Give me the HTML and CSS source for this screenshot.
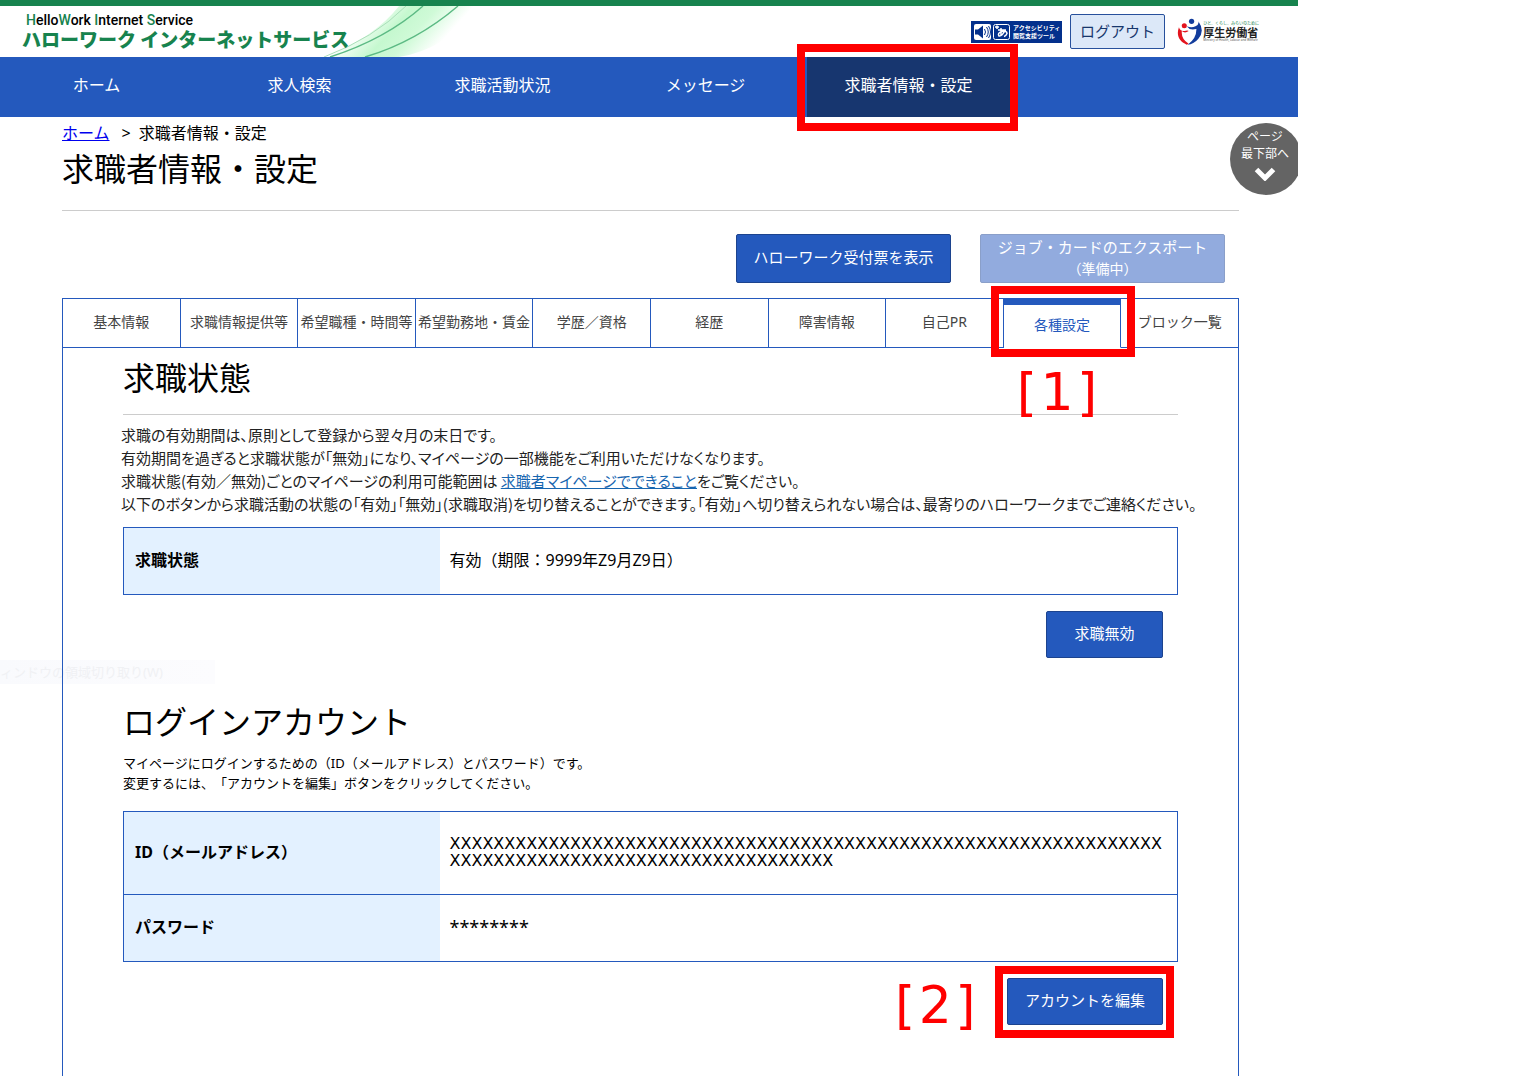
FILE: index.html
```html
<!DOCTYPE html>
<html lang="ja">
<head>
<meta charset="utf-8">
<title>求職者情報・設定</title>
<link rel="stylesheet" href="styles.css">
</head>
<body>
<div class="page">
  <header class="site-header">
    <div class="brand">
      <p class="brand-en"><b>H</b>ello<b>W</b>ork <b>I</b>nternet <b>S</b>ervice</p>
      <p class="brand-ja">ハローワーク インターネットサービス</p>
    </div>
    <svg class="swoosh" viewBox="0 0 160 51" aria-hidden="true">
      <defs>
        <linearGradient id="glow" gradientUnits="userSpaceOnUse" x1="45" y1="5" x2="100" y2="55">
          <stop offset="0" stop-color="#c5f8cf" stop-opacity="0"/>
          <stop offset=".4" stop-color="#c5f8cf"/>
          <stop offset=".65" stop-color="#cffad7"/>
          <stop offset="1" stop-color="#cffad7" stop-opacity="0"/>
        </linearGradient>
      </defs>
      <path d="M0 51 Q50 32 75 0 H160 Q120 44 75 51Z" fill="url(#glow)"/>
      <path d="M0 51 Q50 32 82 0" fill="none" stroke="#a9dfb9"/>
      <path d="M6 51 Q62 33 99 0 M41 51 Q92 36 134 0" fill="none" stroke="#5cba84" stroke-width="1.4"/>
    </svg>
    <div class="header-tools">
      <a class="access" href="#">
        <svg viewBox="0 0 42 22" width="42" height="22" aria-hidden="true">
          <rect x="3" y="3" width="17" height="16" rx="2" fill="#fff"/>
          <path d="M4 8.500h3l5-4v13l-5-4H4z" fill="#03308c"/>
          <path d="M13.500 8q2 3 0 6M15.500 6q3.500 5 0 10M17.500 5q4 6 0 12" fill="none" stroke="#03308c"/>
          <rect x="22.500" y="3.500" width="16" height="15" rx="2" fill="none" stroke="#fff"/>
          <path d="M24 6h4M26 4.500V8M27 9h8M30 7v8M34 9.500q-3 6-6 5.500q-2-3 3-4.500q5-1 5 2q-1 2.500-3 3" fill="none" stroke="#fff" stroke-width="1.500"/>
        </svg>
        <span>アクセシビリティ<br>閲覧支援ツール</span>
      </a>
      <button class="logout" type="button">ログアウト</button>
      <a class="ministry" href="#">
        <svg viewBox="0 0 26 28" width="26" height="28" aria-hidden="true">
          <circle cx="7.500" cy="7.500" r="2.600" fill="#e3141e"/>
          <circle cx="15" cy="3" r="2.700" fill="#123c9c"/>
          <path d="M2 9C-1 17 2 24 10 27L12 26Q4 21 5 13q3 3 7 0q-1-1-4 0Q3 13 2 9Z" fill="#e3141e"/>
          <path d="M22 3Q29 13 22 21Q17 27 11 27Q20 21 20 11q-4 1-7 0l-3-3q5 2 9 0Q23 6 22 3Z" fill="#123c9c"/>
        </svg>
        <span class="ministry-text"><small class="motto">ひと、くらし、みらいのために</small><strong>厚生労働省</strong><small>Ministry of Health, Labour and Welfare</small></span>
      </a>
    </div>
  </header>
  <nav class="main-nav">
    <a href="#">ホーム</a><a href="#">求人検索</a><a href="#">求職活動状況</a><a href="#">メッセージ</a><a class="current marked" href="#">求職者情報・設定</a>
  </nav>
  <a class="to-bottom" href="#bottom">ページ<br>最下部へ
    <svg viewBox="0 0 22 14" width="22" height="14" aria-hidden="true"><path d="M2.500 2.500 11 11l8.500-8.500" fill="none" stroke="#fff" stroke-width="5"/></svg>
  </a>
  <main>
    <p class="crumbs"><a href="#">ホーム</a><span>&gt;</span>求職者情報・設定</p>
    <h1>求職者情報・設定</h1>
    <div class="actions">
      <button class="btn" type="button">ハローワーク受付票を表示</button>
      <button class="btn export" type="button" disabled>ジョブ・カードのエクスポート<br><small>（準備中）</small></button>
    </div>
    <nav class="tabs">
      <a href="#">基本情報</a><a href="#">求職情報提供等</a><a href="#">希望職種・時間等</a><a href="#">希望勤務地・賃金</a><a href="#">学歴／資格</a><a href="#">経歴</a><a href="#">障害情報</a><a href="#">自己PR</a><a class="selected marked" href="#">各種設定<span class="callout">[<i>1</i>]</span></a><a href="#">ブロック一覧</a>
    </nav>
    <div class="panel">
      <section>
        <h2 class="ruled">求職状態</h2>
        <p class="notice">求職の有効期間は、原則として登録から翌々月の末日です。<br>有効期間を過ぎると求職状態が「無効」になり、マイページの一部機能をご利用いただけなくなります。<br>求職状態(有効／無効)ごとのマイページの利用可能範囲は <a href="#">求職者マイページでできること</a>をご覧ください。<br>以下のボタンから求職活動の状態の「有効」「無効」(求職取消)を切り替えることができます。「有効」へ切り替えられない場合は、最寄りのハローワークまでご連絡ください。</p>
        <table>
          <tr><th scope="row">求職状態</th><td>有効（期限：9999年Z9月Z9日）</td></tr>
        </table>
        <div class="row-end"><button class="btn" type="button">求職無効</button></div>
      </section>
      <p class="ghost" aria-hidden="true">ィンドウの領域切り取り(W)</p>
      <section class="account">
        <h2>ログインアカウント</h2>
        <p class="lead">マイページにログインするための（ID（メールアドレス）とパスワード）です。<br>変更するには、「アカウントを編集」ボタンをクリックしてください。</p>
        <table>
          <tr class="tall"><th scope="row">ID（メールアドレス）</th><td class="value-id">XXXXXXXXXXXXXXXXXXXXXXXXXXXXXXXXXXXXXXXXXXXXXXXXXXXXXXXXXXXXXXXXXXXXXXXXXXXXXXXXXXXXXXXXXXXXXXXXXXXX</td></tr>
          <tr><th scope="row">パスワード</th><td class="value-pw">********</td></tr>
        </table>
        <div class="row-end" id="bottom"><span class="marked"><span class="callout">[<i>2</i>]</span><button class="btn" type="button">アカウントを編集</button></span></div>
      </section>
    </div>
  </main>
</div>
</body>
</html>
```
FILE: styles.css
```css
* { box-sizing: border-box; }
body {
  margin: 0;
  padding-right: 228px;
  background: #fff;
  color: #000;
  font: 16px/24px "Noto Sans", "Noto Sans CJK JP", sans-serif;
}
p, h1, h2 { margin: 0; font-weight: 400; }
a { color: inherit; text-decoration: none; }
button { font: inherit; }
.page { position: relative; z-index: 0; min-height: 1076px; display: flex; flex-direction: column; }

.site-header {
  display: flex;
  height: 57px;
  border-top: 6px solid #17834e;
  padding-right: 39px;
}
.brand { width: 324px; padding: 6px 0 0 22px; white-space: nowrap; }
.brand-en { padding-left: 4px; font: 500 14px/16px Roboto, sans-serif; }
.brand-en b { color: #17834e; font-weight: 500; }
.brand-ja { position: relative; z-index: 1; color: #17834e; font: 900 19px/22px "Noto Sans CJK JP", sans-serif; }
.swoosh { width: 160px; height: 51px; }
.header-tools { display: flex; align-items: center; gap: 8px; margin-left: auto; }
.access { display: flex; align-items: center; width: 91px; height: 22px; background: #03308c; color: #fff; font: 700 6px/8px "Noto Sans CJK JP", sans-serif; white-space: nowrap; }
.logout { width: 95px; height: 35px; padding: 0 0 2px; border: 1px solid #27509c; border-radius: 2px; background: #dce8f8; color: #17366c; font-size: 15px; }
.ministry { display: flex; align-items: center; gap: 1px; width: 82px; margin-left: 4px; }
.ministry-text { display: flex; flex-direction: column; white-space: nowrap; }
.ministry-text strong { font: 700 11px/12px "Noto Sans CJK JP", sans-serif; color: #222; }
.ministry-text small { font: 3px/4px "Noto Sans", sans-serif; color: #555; }
.ministry-text .motto { font: 4px/5px "Noto Sans CJK JP", sans-serif; color: #17834e; }

.main-nav { display: flex; height: 60px; padding-right: 288px; background: #2459bd; color: #fff; }
.main-nav a { flex: 1; display: flex; align-items: center; justify-content: center; padding-bottom: 4px; }
.main-nav a:first-child { margin-left: -5px; }
.main-nav .current { background: #17366f; }
.marked { position: relative; }
.marked::after { content: ""; position: absolute; border: 8px solid #f00; pointer-events: none; }
.main-nav .marked::after { inset: -13px -8px -14px -10px; }

.to-bottom { position: absolute; z-index: 1; top: 123px; right: -4px; width: 72px; height: 72px; padding: 5px 2px 0 0; border-radius: 50%; clip-path: inset(0 4px 0 0); background: #646464; color: #fff; font-size: 12px; line-height: 17px; text-align: center; }
.to-bottom svg { display: block; margin: 5px auto 0; }

main { flex: 1; display: flex; flex-direction: column; padding: 4px 59px 0 62px; }
.crumbs { display: flex; }
.crumbs a { color: #00e; text-decoration: underline; }
.crumbs span { padding: 0 8px 0 12px; }
h1 { height: 66px; border-bottom: 1px solid #ccc; font-size: 32px; line-height: 48px; }
.actions { display: flex; justify-content: flex-end; gap: 29px; padding: 23px 14px 15px 0; }
.btn { height: 49px; padding: 0 17px 2px; border: 1px solid #1c438e; border-radius: 2px; background: #2459bd; color: #fff; font-size: 15px; line-height: 21px; white-space: nowrap; }
.actions .btn { width: 215px; padding: 0 0 2px; }
.actions .export { width: 245px; border-color: #8a9fc9; background: #92abde; }
.export small { font-size: 14px; }

.tabs { display: flex; height: 50px; border: 1px solid #2459bd; border-right-width: 0; border-bottom: 0; color: #444; font-size: 14px; }
.tabs a { flex: 1 0 0; display: flex; align-items: center; justify-content: center; padding-bottom: 2px; border-right: 1px solid #2459bd; border-bottom: 1px solid #2459bd; white-space: nowrap; }
.tabs .selected { border-top: 6px solid #2459bd; border-bottom-color: transparent; color: #2459bd; }
.tabs .marked::after { inset: -19px -15px -10px -13px; }
.callout { position: absolute; display: flex; color: #f00; font: 52px/60px "DejaVu Sans", sans-serif; }
.callout i { width: 40px; font-style: normal; text-align: center; }
.tabs .callout { top: 57px; left: 13px; }

.panel { flex: 1; padding: 0 60px 50px; border: solid #2459bd; border-width: 0 1px; }
h2 { font-size: 32px; line-height: 48px; }
.ruled { height: 67px; padding-top: 6px; border-bottom: 1px solid #ccc; }
.notice { padding: 8px 0 12px; margin: 0 -60px 0 -2px; color: #222; font: 15px/23px "Noto Sans CJK JP", sans-serif; font-feature-settings: "palt"; text-spacing-trim: space-all; white-space: nowrap; }
.notice a { color: #1766b0; text-decoration: underline; }
table { width: 100%; table-layout: fixed; border-collapse: collapse; border: 1px solid #2459bd; line-height: 17px; }
tr { height: 67px; border-bottom: 1px solid #2459bd; }
.tall { height: 83px; }
th { width: 316px; padding: 0 11px 2px; background: #e3f1ff; text-align: left; }
td { padding: 0 20px 2px 10px; overflow-wrap: anywhere; }
.value-id { padding-right: 12px; font-family: "DejaVu Sans", sans-serif; }
.value-pw { font-size: 18px; }
.row-end { display: flex; justify-content: flex-end; padding: 16px 15px 0 0; }
.row-end .btn { display: block; min-width: 117px; height: 47px; }
.ghost { position: relative; z-index: -1; height: 24px; margin: 2px 0 0 -123px; width: 215px; background: linear-gradient(to right, #f9fafd, #fcfcfe); color: #f0f1f4; font-size: 13px; line-height: 24px; white-space: nowrap; }
.account { padding-top: 14px; }
.lead { padding: 7px 0 18px; font-size: 13px; line-height: 20px; text-spacing-trim: space-all; }
.row-end .marked::after { inset: -12px -11px -13px -12px; }
.row-end .callout { top: -3px; left: -112px; }
```
